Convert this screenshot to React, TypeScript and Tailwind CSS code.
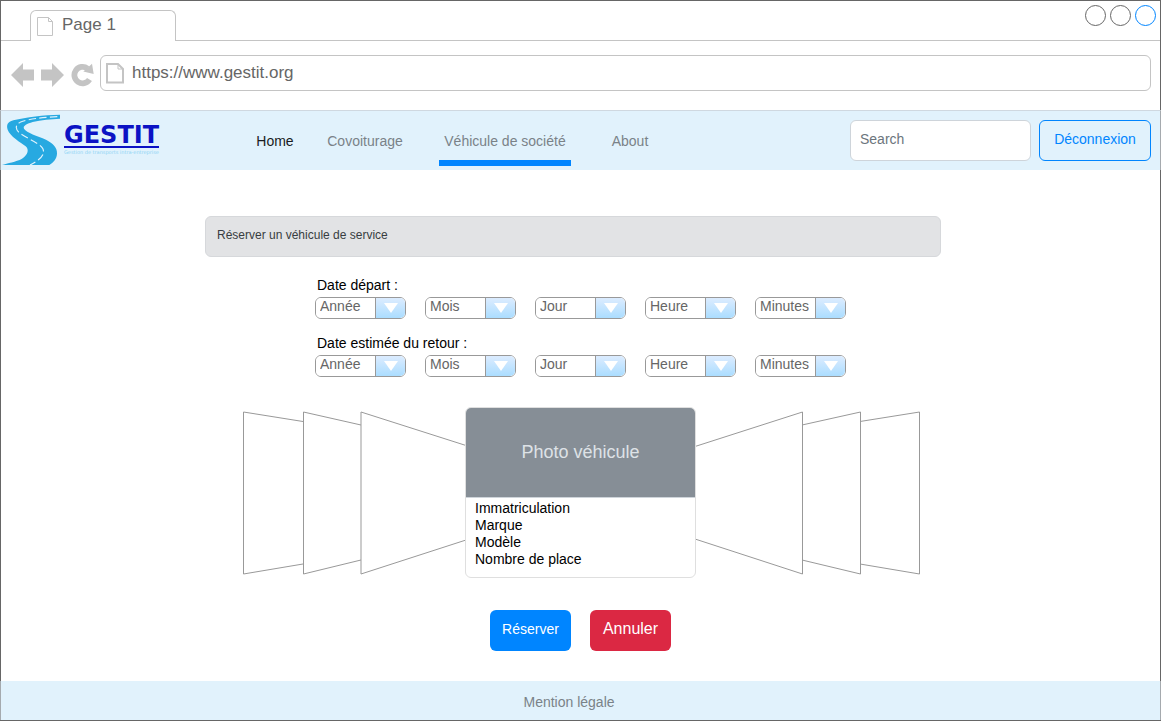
import type { ReactNode } from "react";

const fields = ["Année", "Mois", "Jour", "Heure", "Minutes"];

function PageIcon({ bold = false }: { bold?: boolean }) {
  return bold ? (
    <svg width="19" height="22" viewBox="0 0 19 22" fill="none" stroke="#c4c4c4" strokeWidth="2" aria-hidden="true">
      <path d="M2 2H13L18 7V20.500H2Z" />
      <path d="M13 2V7H18" strokeWidth="1" />
    </svg>
  ) : (
    <svg width="17" height="20" viewBox="0 0 17 20" fill="none" stroke="#c4c4c4" aria-hidden="true">
      <path d="M.5 .5H11.500L15.500 4.500V18.500H.5Z" />
      <path d="M11.500 .5V4.500H15.500" />
    </svg>
  );
}

function Logo() {
  return (
    <a href="#" aria-label="Gestit" className="flex w-[160px] shrink-0 items-start gap-1 pl-px">
      <svg width="58" height="51" viewBox="6 27 174 153" className="mt-[3px] shrink-0" aria-hidden="true">
        <path
          fill="#27a9e1"
          d="M180 29C130 30 80 36 40 46C22 51 19 60 23 74C30 94 62 112 77 124C88 134 84 150 66 161C48 171 22 174 6 180H148C160 172 170 162 171 146C172 128 160 116 138 104C112 92 80 84 72 71C68 62 82 56 98 51C124 44 152 43 180 41Z"
        />
        <path
          fill="none"
          stroke="#e1f2fc"
          strokeWidth="3.500"
          strokeDasharray="22 10"
          d="M172 35C130 37 84 42 62 51C44 60 46 74 60 85C84 102 118 114 128 130C136 146 126 162 90 180"
        />
      </svg>
      <span className="flex flex-col pt-[13px]">
        <span className="border-b-2 border-[#0b12c4] font-['DejaVu_Sans',sans-serif] text-2xl leading-[22px] font-bold text-[#0b12c4]">
          GESTIT
        </span>
        <span className="font-['DejaVu_Sans',sans-serif] text-[5px] leading-[8px] whitespace-nowrap text-[#8fd4f5]">
          Gestion de transports intra-entreprise
        </span>
      </span>
    </a>
  );
}

function NavLink({ width, active = false, current = false, children }: { width: string; active?: boolean; current?: boolean; children: ReactNode }) {
  return (
    <a href="#" className={`${width} flex h-[55px] justify-center ${active ? "text-[#1a1c1e]" : "text-[#7a8288]"}`}>
      <span className={`px-[5px] pt-[18px] whitespace-nowrap ${current ? "border-b-[6px] border-[#0085ff]" : ""}`}>{children}</span>
    </a>
  );
}

function DateRow({ id, label }: { id: string; label: string }) {
  return (
    <fieldset>
      <legend className="h-[22px] pl-0.5 leading-5 text-black">{label}</legend>
      <div className="flex gap-[19px]">
        {fields.map((field) => (
          <div key={field} className="relative flex h-[22px] w-[91px] overflow-hidden rounded-md border border-[#999]">
            <select
              id={`${id}-${field}`}
              aria-label={`${label} ${field}`}
              className="w-full appearance-none bg-white pb-1 pl-1 leading-4 text-[#666] outline-none"
            >
              <option>{field}</option>
            </select>
            <span className="pointer-events-none absolute inset-y-0 right-0 flex w-[30px] items-center justify-center border-l border-[#999] bg-linear-to-b from-[#dcecff] to-[#abddff]">
              <svg width="14" height="10" viewBox="0 0 14 10" fill="#fff" aria-hidden="true">
                <path d="M0 0H14L7 10Z" />
              </svg>
            </span>
          </div>
        ))}
      </div>
    </fieldset>
  );
}

function SidePanels({ paths }: { paths: string[] }) {
  return (
    <svg width="224" height="171" viewBox="0 0 224 171" fill="#fff" stroke="#999" className="shrink-0" aria-hidden="true">
      {paths.map((d) => (
        <path key={d} d={d} />
      ))}
    </svg>
  );
}

const leftPanels = ["M62 14.500L2.500 5V167L62 157", "M120 18L62.500 5V167L120 153", "M225 38.500L120 5V167L225 133"];
const rightPanels = ["M164 14.500L223.500 5V167L164 157", "M106 18L164.500 5V167L106 153", "M-1 39.500L106.500 5V167L-1 132"];

export default function App() {
  return (
    <div className="flex min-h-screen flex-col bg-white pb-px font-['Liberation_Sans',Arial,sans-serif] text-sm">
      <div className="flex flex-1 flex-col border border-[#666]">
        <div className="flex h-10 items-end">
          <div className="w-[29px] border-b border-[#c4c4c4]" />
          <div className="flex h-[31px] w-[146px] gap-2 rounded-t-md border-x border-t border-[#c4c4c4] pt-1.5 pl-1.5">
            <PageIcon />
            <span className="-mt-0.5 text-[17px] leading-5 text-[#666]">Page 1</span>
          </div>
          <div className="flex h-full flex-1 justify-end gap-1 border-b border-[#c4c4c4] pt-1 pr-1">
            <button aria-label="Réduire" className="size-[21px] rounded-full border border-[#666]" />
            <button aria-label="Agrandir" className="size-[21px] rounded-full border border-[#666]" />
            <button aria-label="Fermer" className="size-[21px] rounded-full border border-[#0085ff]" />
          </div>
        </div>

        <div className="flex h-[69px] items-start pt-[14px] pr-[9px] pl-2.5">
          <div className="flex h-9 w-[89px] items-center gap-[7px] pt-1">
            <button aria-label="Précédent">
              <svg width="23" height="24" viewBox="0 0 23 24" fill="#c4c4c4">
                <path d="M0 12L12 0V6.500H23V17.500H12V24Z" />
              </svg>
            </button>
            <button aria-label="Suivant">
              <svg width="23" height="24" viewBox="0 0 23 24" fill="#c4c4c4">
                <path d="M23 12L11 0V6.500H0V17.500H11V24Z" />
              </svg>
            </button>
            <button aria-label="Actualiser">
              <svg width="23" height="24" viewBox="0 0 23 24">
                <path d="M18.500 16.500A8.200 8.200 0 1 1 16.500 5.500" fill="none" stroke="#c4c4c4" strokeWidth="5.800" />
                <path d="M21 .8L22.700 11L12.300 8.500Z" fill="#c4c4c4" />
              </svg>
            </button>
          </div>
          <div className="flex h-9 flex-1 items-center gap-2 rounded-md border border-[#c4c4c4] pl-1">
            <PageIcon bold />
            <input
              aria-label="Adresse"
              defaultValue="https://www.gestit.org"
              className="min-w-0 flex-1 text-[17px] leading-5 text-[#666] outline-none"
            />
          </div>
        </div>

        <header className="-mx-px flex h-[60px] border-x border-t border-x-[#a5aaae] border-t-[#cfd8e0] bg-[#e1f2fc]">
          <Logo />
          <nav className="ml-[74px] flex leading-6">
            <NavLink width="w-20" active>Home</NavLink>
            <NavLink width="w-[100px]">Covoiturage</NavLink>
            <NavLink width="w-[180px]" current>Véhicule de société</NavLink>
            <NavLink width="w-[70px]">About</NavLink>
          </nav>
          <div className="ml-auto flex gap-2 pt-[9px] pr-[9px]">
            <input
              type="search"
              placeholder="Search"
              aria-label="Search"
              className="h-[41px] w-[181px] rounded-md border border-[#ced4da] bg-white px-[9px] pb-[3px] outline-none placeholder:text-[#6c757d]"
            />
            <button className="h-[41px] w-28 rounded-md border border-[#0085ff] pb-[3px] text-[#0085ff]">Déconnexion</button>
          </div>
        </header>

        <main className="flex flex-1 flex-col items-center pt-[46px]">
          <div className="flex w-full justify-center pr-[15px]">
            <h1 className="h-[41px] w-[736px] rounded-md border border-[#d6d8db] bg-[#e2e3e5] pt-[9px] pl-[11px] text-xs leading-[18px] text-[#383d41]">
              Réserver un véhicule de service
            </h1>
          </div>

          <form className="mt-[18px] flex flex-col gap-[14px]">
            <DateRow id="depart" label="Date départ :" />
            <DateRow id="retour" label="Date estimée du retour :" />
          </form>

          <section aria-label="Véhicules" className="mt-[30px] flex">
            <SidePanels paths={leftPanels} />
            <article className="h-[171px] w-[231px] overflow-hidden rounded-md border border-[#dfdfdf]">
              <div className="flex h-[90px] items-center justify-center border-b border-[#ced4da] bg-[#868e96] pb-0.5 text-lg text-[#dee2e6]">
                Photo véhicule
              </div>
              <ul className="pt-0.5 pl-[9px] leading-[17px] text-black">
                <li>Immatriculation</li>
                <li>Marque</li>
                <li>Modèle</li>
                <li>Nombre de place</li>
              </ul>
            </article>
            <SidePanels paths={rightPanels} />
          </section>

          <div className="mt-8 mb-7 flex gap-[19px]">
            <button className="h-[41px] w-[81px] rounded-md bg-[#0085ff] pb-[3px] text-white">Réserver</button>
            <button className="h-[41px] w-[81px] rounded-md bg-[#db2843] pb-[3px] text-base text-white">Annuler</button>
          </div>
        </main>

        <footer className="-mx-px flex h-[39px] items-center justify-center border-x border-[#a5aaae] bg-[#e1f2fc] pt-0.5 pr-[23px]">
          <a href="#" className="text-[#7a8288]">Mention légale</a>
        </footer>
      </div>
    </div>
  );
}
